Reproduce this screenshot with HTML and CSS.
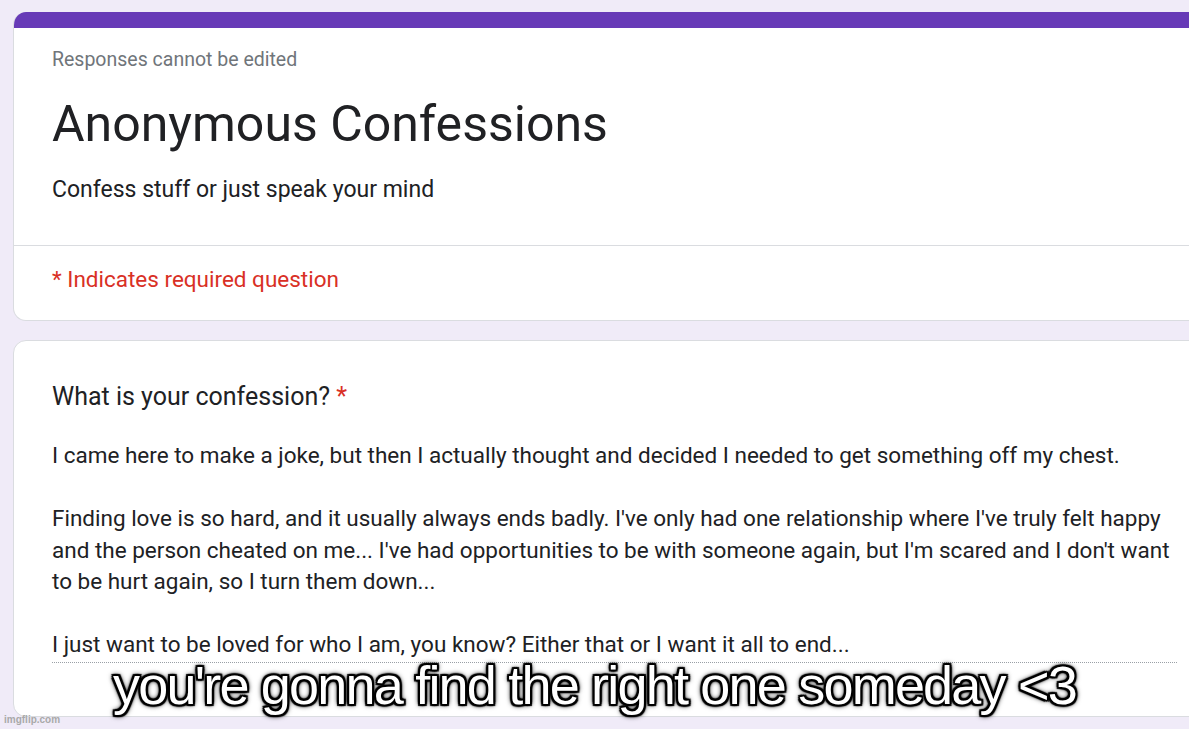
FILE: index.html
```html
<!DOCTYPE html>
<html>
<head>
<meta charset="utf-8">
<link rel="stylesheet" href="styles.css">
</head>
<body>
<div class="page">
  <section class="card header-card">
    <div class="accent"></div>
    <div class="header-main">
      <div class="note">Responses cannot be edited</div>
      <h1 class="title">Anonymous Confessions</h1>
      <div class="desc">Confess stuff or just speak your mind</div>
    </div>
    <div class="required">* Indicates required question</div>
  </section>
  <section class="card question-card">
    <div class="question">What is your confession? <span class="star">*</span></div>
    <div class="answer">
      <p>I came here to make a joke, but then I actually thought and decided I needed to get something off my chest.</p>
      <p>Finding love is so hard, and it usually always ends badly. I've only had one relationship where I've truly felt happy and the person cheated on me... I've had opportunities to be with someone again, but I'm scared and I don't want to be hurt again, so I turn them down...</p>
      <p>I just want to be loved for who I am, you know? Either that or I want it all to end...</p>
    </div>
  </section>
</div>
<div class="caption">you're gonna find the right one someday &lt;3</div>
<div class="watermark">imgflip.com</div>
</body>
</html>
```
FILE: styles.css
```css
html, body {
  margin: 0;
  padding: 0;
  height: 100%;
  overflow: hidden;
}
body {
  background: #f0ebf8;
  font-family: Roboto, "Noto Sans", sans-serif;
  color: #202124;
  position: relative;
}
.page {
  padding: 12px 0 0 13px;
  margin-right: -30px;
  display: flex;
  flex-direction: column;
  gap: 19px;
}
.card {
  background: #fff;
  border: 1px solid #dadce0;
  border-radius: 13px;
  overflow: hidden;
}
.header-card {
  border-top: none;
  height: 309px;
  box-sizing: border-box;
}
.accent {
  height: 16px;
  background: #673ab7;
}
.header-main {
  padding: 20px 38px 0 38px;
  height: 218px;
  box-sizing: border-box;
  border-bottom: 1px solid #dadce0;
}
.note {
  font-size: 19.5px;
  color: #70757a;
  line-height: 24px;
}
.title {
  margin: 22px 0 0 0;
  font-weight: 400;
  font-size: 50px;
  line-height: 60px;
}
.desc {
  margin-top: 21px;
  font-size: 23px;
  line-height: 30px;
}
.required {
  padding: 18px 38px 0 38px;
  font-size: 22.5px;
  line-height: 30px;
  color: #d93025;
}
.question-card {
  height: 377px;
  box-sizing: border-box;
  padding: 40px 38px 0 38px;
}
.question {
  font-size: 25px;
  line-height: 32px;
}
.star {
  color: #d93025;
}
.answer {
  margin-top: 27px;
  width: 1125px;
  font-size: 22.5px;
  line-height: 31.5px;
  border-bottom: 1px dotted #9aa0a6;
  padding-bottom: 1px;
}
.answer p {
  margin: 0 0 31.5px 0;
}
.answer p:last-child {
  margin-bottom: 0;
}
.caption {
  position: absolute;
  left: 0;
  right: 0;
  top: 663px;
  text-align: center;
  font-family: "Liberation Sans", Arial, sans-serif;
  font-size: 54px;
  letter-spacing: -1.8px;
  line-height: 44px;
  color: #fff;
  text-shadow:
    2px 0 1px #000, -2px 0 1px #000, 0 2px 1px #000, 0 -2px 1px #000,
    2px 2px 1px #000, -2px -2px 1px #000, 2px -2px 1px #000, -2px 2px 1px #000,
    0 0 5px #000, 0 0 6px #000;
}
.watermark {
  position: absolute;
  left: 4px;
  top: 714px;
  font-family: "Liberation Sans", Arial, sans-serif;
  font-size: 10px;
  font-weight: bold;
  color: #a9a9a9;
}
```
